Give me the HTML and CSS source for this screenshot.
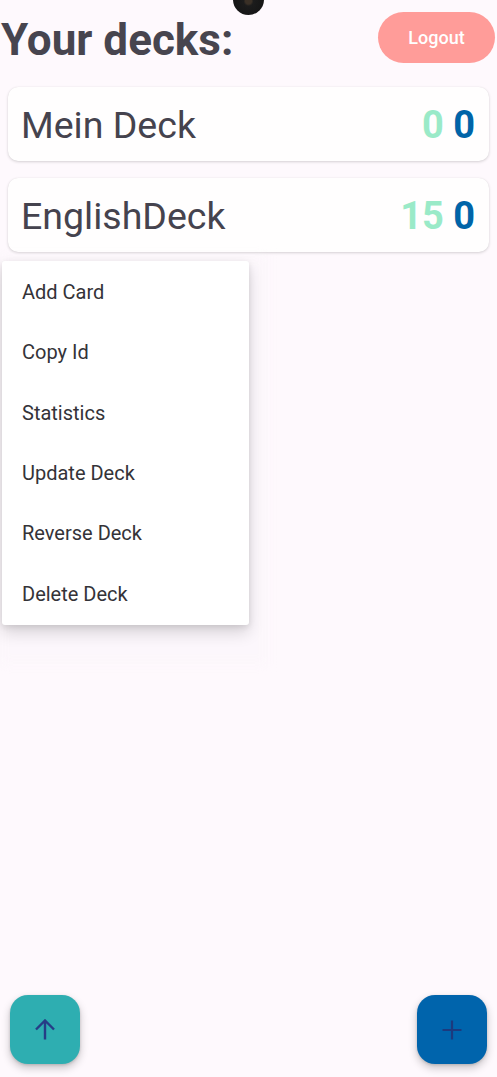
FILE: index.html
```html
<!DOCTYPE html>
<html>
<head>
<meta charset="utf-8">
<link rel="stylesheet" href="styles.css">
</head>
<body>
<div class="camera"></div>
<div class="page">
  <header class="header">
    <h1 class="title">Your decks:</h1>
    <button class="logout">Logout</button>
  </header>
  <div class="decks">
    <div class="deck">
      <span class="deck-name">Mein Deck</span>
      <span class="counts"><span class="new">0</span> <span class="due">0</span></span>
    </div>
    <div class="deck">
      <span class="deck-name">EnglishDeck</span>
      <span class="counts"><span class="new">15</span> <span class="due">0</span></span>
    </div>
  </div>
</div>
<div class="menu-scrim"></div>
<ul class="menu">
  <li>Add Card</li>
  <li>Copy Id</li>
  <li>Statistics</li>
  <li>Update Deck</li>
  <li>Reverse Deck</li>
  <li>Delete Deck</li>
</ul>
<button class="fab fab-up" aria-label="Up">
  <svg width="22" height="22" viewBox="0 0 22 22"><path d="M11 20.5V2M2 10.5L11 1.5l9 9" fill="none" stroke="#263d86" stroke-width="2.4"/></svg>
</button>
<button class="fab fab-add" aria-label="Add">
  <svg width="22" height="22" viewBox="0 0 22 22"><path d="M11 1.5v19M1.5 11h19" fill="none" stroke="#1c3a7e" stroke-width="2.2"/></svg>
</button>
</body>
</html>
```
FILE: styles.css
```css
html, body {
  margin: 0;
  padding: 0;
  background: #fef9fd;
  font-family: Roboto, "Noto Sans", sans-serif;
  height: 1077px;
  overflow: hidden;
}
.page {
  display: flex;
  flex-direction: column;
}
.header {
  display: flex;
  justify-content: space-between;
  align-items: flex-start;
  padding: 12px 2px 0 0;
  height: 75px;
  box-sizing: border-box;
}
.title {
  margin: 0;
  padding-left: 1px;
  font-size: 44px;
  font-weight: 700;
  color: #47454f;
  line-height: 56px;
}
.logout {
  width: 117px;
  height: 51px;
  border: none;
  border-radius: 26px;
  background: #ff9c99;
  color: #ffffff;
  font-family: Roboto, sans-serif;
  font-size: 18px;
  font-weight: 500;
}
.decks {
  display: flex;
  flex-direction: column;
  gap: 17px;
  padding: 12px 8px 0 8px;
}
.deck {
  height: 74px;
  background: #fffefe;
  border-radius: 10px;
  box-shadow: 0 1px 3px rgba(0,0,0,0.16), 0 0 1px rgba(0,0,0,0.08);
  display: flex;
  align-items: center;
  justify-content: space-between;
  padding: 2px 14px 0 13px;
  box-sizing: border-box;
}
.deck-name {
  font-size: 37.5px;
  color: #45434e;
}
.counts {
  font-size: 38px;
  font-weight: 700;
}
.new { color: #9aeac8; }
.due { color: #0064a8; }
.camera {
  position: absolute;
  left: 233px;
  top: -16px;
  width: 31px;
  height: 31px;
  border-radius: 50%;
  background: radial-gradient(circle at 50% 55%, #3a3026 0 3px, #1c1c1c 5px, #101010 100%);
}
.menu-scrim {
  position: absolute;
  left: 0;
  top: 256px;
  width: 268px;
  height: 408px;
  background: rgba(250,244,249,0.35);
  filter: blur(6px);
}
.menu {
  position: absolute;
  left: 2px;
  top: 261px;
  width: 247px;
  margin: 0;
  padding: 1px 0;
  list-style: none;
  background: #ffffff;
  border-radius: 3px;
  box-shadow: 0 8px 16px rgba(0,0,0,0.14), 0 2px 6px rgba(0,0,0,0.10);
}
.menu li {
  height: 60.3px;
  display: flex;
  align-items: center;
  padding-left: 20px;
  font-size: 20px;
  color: #343338;
}
.fab {
  position: fixed;
  bottom: 13px;
  width: 70px;
  height: 69px;
  border: none;
  border-radius: 18px;
  display: flex;
  align-items: center;
  justify-content: center;
  box-shadow: 0 4px 8px rgba(0,0,0,0.22), 0 1px 3px rgba(0,0,0,0.15);
  padding: 0;
}
.fab-up {
  left: 10px;
  background: #2eaeb1;
}
.fab-add {
  right: 10px;
  background: #0064ac;
}
```
